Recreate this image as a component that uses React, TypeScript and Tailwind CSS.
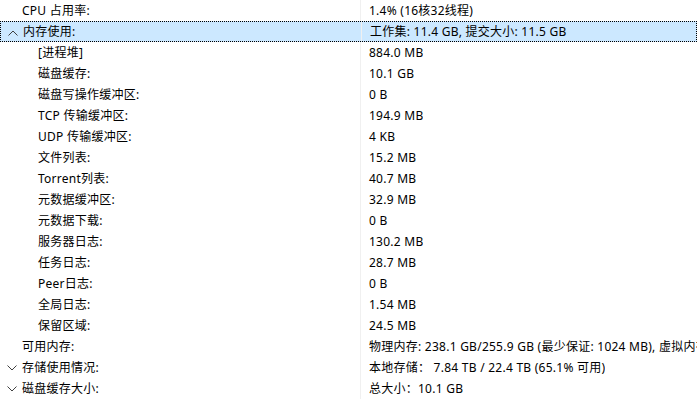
import React from 'react'

type Row = {
  label: string
  value: string
  level: 0 | 1
  chevron?: 'up' | 'down'
  selected?: boolean
}

const rows: Row[] = [
  { label: 'CPU 占用率:', value: '1.4% (16核32线程)', level: 0 },
  { label: '内存使用:', value: '工作集: 11.4 GB, 提交大小: 11.5 GB', level: 0, chevron: 'up', selected: true },
  { label: '[进程堆]', value: '884.0 MB', level: 1 },
  { label: '磁盘缓存:', value: '10.1 GB', level: 1 },
  { label: '磁盘写操作缓冲区:', value: '0 B', level: 1 },
  { label: 'TCP 传输缓冲区:', value: '194.9 MB', level: 1 },
  { label: 'UDP 传输缓冲区:', value: '4 KB', level: 1 },
  { label: '文件列表:', value: '15.2 MB', level: 1 },
  { label: 'Torrent列表:', value: '40.7 MB', level: 1 },
  { label: '元数据缓冲区:', value: '32.9 MB', level: 1 },
  { label: '元数据下载:', value: '0 B', level: 1 },
  { label: '服务器日志:', value: '130.2 MB', level: 1 },
  { label: '任务日志:', value: '28.7 MB', level: 1 },
  { label: 'Peer日志:', value: '0 B', level: 1 },
  { label: '全局日志:', value: '1.54 MB', level: 1 },
  { label: '保留区域:', value: '24.5 MB', level: 1 },
  { label: '可用内存:', value: '物理内存: 238.1 GB/255.9 GB (最少保证: 1024 MB), 虚拟内存: 2.1 TB/2.1 TB', level: 0 },
  { label: '存储使用情况:', value: '本地存储：  7.84 TB / 22.4 TB (65.1% 可用)', level: 0, chevron: 'down' },
  { label: '磁盘缓存大小:', value: '总大小：10.1 GB', level: 0, chevron: 'down' },
]

function Chevron({ dir }: { dir: 'up' | 'down' }) {
  return (
    <svg width="10" height="6" viewBox="0 0 10 6" className="absolute left-[7px] top-[8px]">
      <polyline
        points={dir === 'up' ? '0.5,5.5 5,1 9.5,5.5' : '0.5,0.5 5,5 9.5,0.5'}
        fill="none"
        stroke="#404040"
        strokeWidth="1"
      />
    </svg>
  )
}

export default function App() {
  return (
    <div
      className="w-[697px] h-[399px] overflow-hidden bg-white text-[12px] tracking-[0.25px] text-black"
      style={{ fontFamily: '"Noto Sans", "Noto Sans CJK SC", sans-serif' }}
    >
      {rows.map((r, i) => (
        <div
          key={i}
          className={`flex h-[21px] items-center whitespace-nowrap ${
            r.selected ? 'bg-[#cce8ff] border border-dotted border-black' : ''
          }`}
        >
          <div
            className={`relative w-[361px] h-full flex items-center shrink-0 border-r border-[#f0f0f0] ${
              r.level === 0 ? 'pl-[22px]' : 'pl-[38px]'
            }`}
          >
            {r.chevron && <Chevron dir={r.chevron} />}
            {r.label}
          </div>
          <div className="pl-[8px] h-full flex items-center overflow-hidden">{r.value}</div>
        </div>
      ))}
    </div>
  )
}
